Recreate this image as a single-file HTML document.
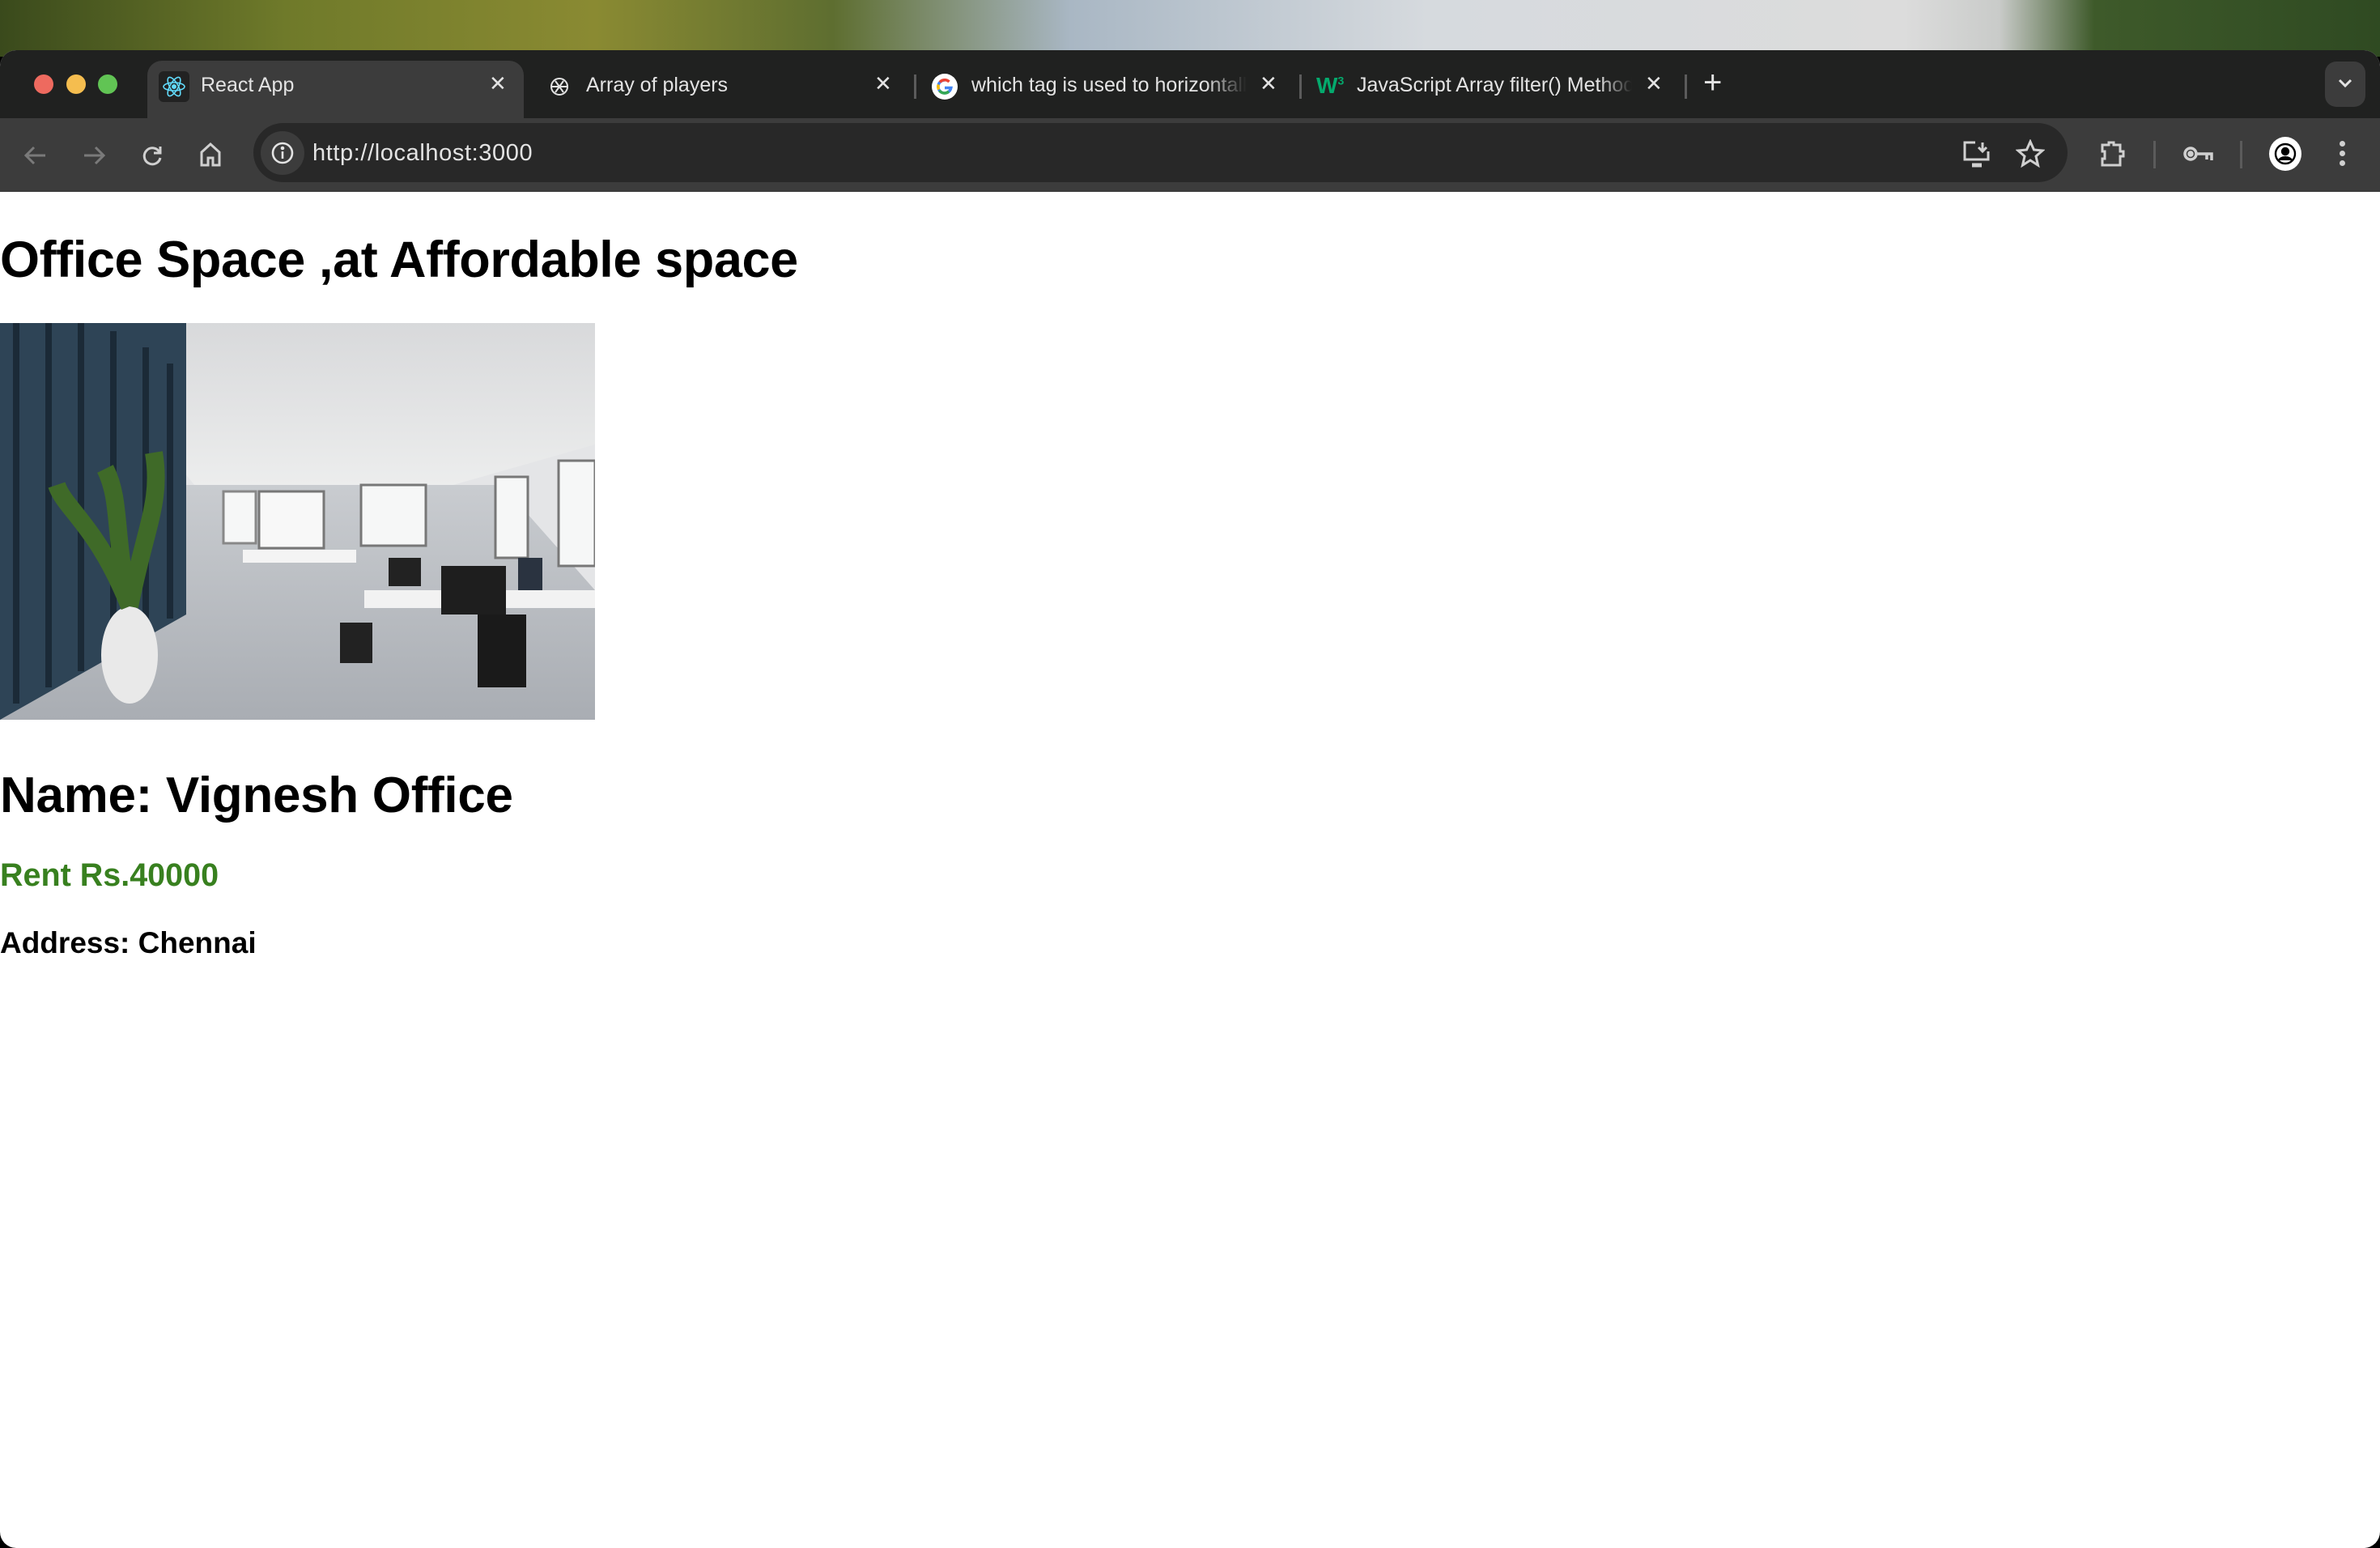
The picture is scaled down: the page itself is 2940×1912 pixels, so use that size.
<!DOCTYPE html>
<html><head><meta charset="utf-8"><style>
*{margin:0;padding:0;box-sizing:border-box}
body{width:2940px;height:1912px;overflow:hidden;background:#000;font-family:"Liberation Sans",sans-serif;position:relative}
.abs{position:absolute}
.wall{left:0;top:0;width:2940px;height:70px;background:linear-gradient(90deg,#3a4a1c 0%,#6f7a2a 12%,#8a8a32 25%,#5e6e30 35%,#a9b7c4 45%,#d6dade 60%,#dcdcdc 80%,#c9cbc9 84%,#3e5a2a 88%,#2f4a22 100%)}
.win{left:0;top:62px;width:2940px;height:1850px;background:#fff;border-radius:20px 20px 20px 20px;overflow:hidden}
.tabbar{left:0;top:0;width:2940px;height:84px;background:#202120}
.toolbar{left:0;top:84px;width:2940px;height:91px;background:#3c3c3c}
.tab{color:#e3e3e3;font-size:25px;white-space:nowrap;overflow:hidden}
.x{color:#e3e3e3;font-size:26px}
.sep{width:3px;height:30px;background:#5b5b5b}
.content{color:#000;font-weight:bold;white-space:nowrap}
</style></head><body>
<div class="abs wall"></div>
<div class="abs win">
 <div class="abs tabbar"></div>
 <div class="abs" style="left:42px;top:30px;width:24px;height:24px;border-radius:50%;background:#ee6a5f"></div>
 <div class="abs" style="left:82px;top:30px;width:24px;height:24px;border-radius:50%;background:#f5bd4f"></div>
 <div class="abs" style="left:121px;top:30px;width:24px;height:24px;border-radius:50%;background:#61c454"></div>
 <div class="abs" style="left:182px;top:13px;width:465px;height:72px;background:#3c3c3c;border-radius:18px 18px 0 0"></div>
 <div class="abs" style="left:196px;top:26px;width:38px;height:38px;background:#222;border-radius:6px"></div>
 <svg class="abs" style="left:200px;top:30px" width="30" height="30" viewBox="0 0 30 30" fill="none" stroke="#61dafb" stroke-width="1.6"><ellipse cx="15" cy="15" rx="13" ry="5"/><ellipse cx="15" cy="15" rx="13" ry="5" transform="rotate(60 15 15)"/><ellipse cx="15" cy="15" rx="13" ry="5" transform="rotate(-60 15 15)"/><circle cx="15" cy="15" r="2.2" fill="#61dafb"/></svg>
 <div class="abs tab" style="left:248px;top:29px">React App</div>
 <div class="abs x" style="left:604px;top:26px">✕</div>
 <svg class="abs" style="left:676px;top:30px" width="30" height="30" viewBox="0 0 30 30" fill="none" stroke="#e3e3e3" stroke-width="2"><circle cx="15" cy="15" r="10"/><path d="M10 8 L20 22 M20 8 L10 22 M5 15 H25"/></svg>
 <div class="abs tab" style="left:724px;top:29px">Array of players</div>
 <div class="abs x" style="left:1080px;top:26px">✕</div>
 <div class="abs sep" style="left:1129px;top:30px"></div>
 <svg class="abs" style="left:1150px;top:28px" width="34" height="34" viewBox="0 0 34 34"><circle cx="17" cy="17" r="16" fill="#fff"/><path d="M17 9a8 8 0 1 0 7.8 9.5H17" fill="none" stroke="#4285f4" stroke-width="3.5"/><path d="M11 11.5a8 8 0 0 1 11.5-.5" fill="none" stroke="#ea4335" stroke-width="3.5"/><path d="M9.3 14.5a8 8 0 0 0 .4 6" fill="none" stroke="#fbbc05" stroke-width="3.5"/><path d="M10.5 22a8 8 0 0 0 11.5 1" fill="none" stroke="#34a853" stroke-width="3.5"/></svg>
 <div class="abs tab" style="left:1200px;top:29px;width:340px;-webkit-mask-image:linear-gradient(90deg,#000 85%,transparent)">which tag is used to horizontally</div>
 <div class="abs x" style="left:1556px;top:26px">✕</div>
 <div class="abs sep" style="left:1605px;top:30px"></div>
 <div class="abs" style="left:1626px;top:28px;color:#04aa6d;font-weight:bold;font-size:28px">W<sup style="font-size:14px">3</sup></div>
 <div class="abs tab" style="left:1676px;top:29px;width:340px;-webkit-mask-image:linear-gradient(90deg,#000 88%,transparent)">JavaScript Array filter() Method</div>
 <div class="abs x" style="left:2032px;top:26px">✕</div>
 <div class="abs sep" style="left:2081px;top:30px"></div>
 <div class="abs" style="left:2104px;top:18px;color:#e3e3e3;font-size:40px">+</div>
 <div class="abs" style="left:2872px;top:14px;width:50px;height:56px;background:#3c3c3c;border-radius:14px"></div>
 <svg class="abs" style="left:2888px;top:35px" width="18" height="12" viewBox="0 0 18 12" fill="none" stroke="#e3e3e3" stroke-width="3"><path d="M2 2 L9 9 L16 2"/></svg>
 <div class="abs toolbar"></div>
 <svg class="abs" style="left:28px;top:114px" width="32" height="32" viewBox="0 0 32 32" fill="none" stroke="#7a7a7a" stroke-width="3"><path d="M28 16H5 M14 6 L4 16 L14 26"/></svg>
 <svg class="abs" style="left:100px;top:114px" width="32" height="32" viewBox="0 0 32 32" fill="none" stroke="#7a7a7a" stroke-width="3"><path d="M4 16H27 M18 6 L28 16 L18 26"/></svg>
 <svg class="abs" style="left:172px;top:114px" width="32" height="32" viewBox="0 0 32 32" fill="none" stroke="#d0d0d0" stroke-width="3"><path d="M25 12A10 10 0 1 0 26 19"/><path d="M26 5V13H18" /></svg>
 <svg class="abs" style="left:244px;top:112px" width="32" height="34" viewBox="0 0 32 34" fill="none" stroke="#d0d0d0" stroke-width="3"><path d="M5 14 L16 4 L27 14 V30 H19 V21 H13 V30 H5 Z"/></svg>
 <div class="abs" style="left:313px;top:90px;width:2241px;height:73px;background:#282828;border-radius:37px"></div>
 <div class="abs" style="left:322px;top:100px;width:54px;height:54px;background:#3c3c3c;border-radius:50%"></div>
 <svg class="abs" style="left:333px;top:111px" width="32" height="32" viewBox="0 0 32 32" fill="none" stroke="#e3e3e3" stroke-width="2.6"><circle cx="16" cy="16" r="12"/><path d="M16 14V23"/><circle cx="16" cy="10" r="1" fill="#e3e3e3"/></svg>
 <div class="abs" style="left:386px;top:111px;color:#e3e3e3;font-size:29px;letter-spacing:0.6px">http://localhost:3000</div>
 <svg class="abs" style="left:2424px;top:111px" width="36" height="34" viewBox="0 0 36 34" fill="none" stroke="#d0d0d0" stroke-width="3"><path d="M16 3H3V24H32V14"/><path d="M25 3V14 M20 9 L25 14 L30 9"/><path d="M12 31H24" stroke-width="5"/></svg>
 <svg class="abs" style="left:2490px;top:110px" width="36" height="36" viewBox="0 0 36 36" fill="none" stroke="#d0d0d0" stroke-width="3"><path d="M18 3 L22.5 13 L33 14 L25 21 L27.5 32 L18 26 L8.5 32 L11 21 L3 14 L13.5 13 Z"/></svg>
 <svg class="abs" style="left:2592px;top:110px" width="36" height="36" viewBox="0 0 36 36" fill="none" stroke="#d0d0d0" stroke-width="3"><path d="M5 7H13V4H19V7H27V15H31V21H27V32H5V24H8V15H5Z"/></svg>
 <div class="abs sep" style="left:2660px;top:112px;height:34px"></div>
 <svg class="abs" style="left:2696px;top:114px" width="40" height="28" viewBox="0 0 40 28" fill="none" stroke="#d0d0d0" stroke-width="3.5"><circle cx="10" cy="14" r="7"/><path d="M17 14H36V22 M30 14V21"/><circle cx="10" cy="14" r="2" fill="#d0d0d0"/></svg>
 <div class="abs sep" style="left:2767px;top:112px;height:34px"></div>
 <div class="abs" style="left:2803px;top:107px;width:40px;height:42px;background:#fff;border-radius:50%"></div>
 <svg class="abs" style="left:2808px;top:113px" width="30" height="30" viewBox="0 0 30 30" fill="none" stroke="#000" stroke-width="2.4"><circle cx="15" cy="15" r="12"/><circle cx="15" cy="12" r="4" fill="#000"/><path d="M7 23c3-5 13-5 16 0" fill="#000"/></svg>
 <div class="abs" style="left:2890px;top:112px;width:7px;height:7px;border-radius:50%;background:#d0d0d0;box-shadow:0 12px 0 #d0d0d0,0 24px 0 #d0d0d0"></div>

 <div class="abs content" style="left:0;top:228px;font-size:63px;line-height:63px;letter-spacing:-0.4px">Office Space ,at Affordable space</div>
 <svg class="abs" style="left:0;top:337px" width="735" height="490" viewBox="0 0 735 490">
  <defs>
   <linearGradient id="ceil" x1="0" y1="0" x2="0" y2="1"><stop offset="0" stop-color="#d8d9db"/><stop offset="1" stop-color="#eceded"/></linearGradient>
   <linearGradient id="floor" x1="0" y1="0" x2="0" y2="1"><stop offset="0" stop-color="#c9ccd0"/><stop offset="1" stop-color="#a9adb3"/></linearGradient>
  </defs>
  <rect width="735" height="490" fill="#e4e5e7"/>
  <polygon points="0,0 735,0 735,150 560,200 240,200 200,150 160,0" fill="url(#ceil)"/>
  <polygon points="220,200 620,200 735,330 735,490 0,490 0,420" fill="url(#floor)"/>
  <polygon points="0,0 230,0 230,360 0,490" fill="#2e4456"/>
  <g stroke="#1b2a37" stroke-width="8"><path d="M20 0V470 M60 0V450 M100 0V430 M140 10V410 M180 30V380 M210 50V365"/></g>
  <rect x="276" y="208" width="40" height="64" fill="#f6f7f7" stroke="#888" stroke-width="3"/>
  <rect x="320" y="208" width="80" height="70" fill="#f8f8f8" stroke="#777" stroke-width="3"/>
  <rect x="446" y="200" width="80" height="75" fill="#f6f7f7" stroke="#777" stroke-width="3"/>
  <rect x="612" y="190" width="40" height="100" fill="#f6f7f7" stroke="#777" stroke-width="3"/>
  <rect x="690" y="170" width="45" height="130" fill="#f6f7f7" stroke="#777" stroke-width="3"/>
  <rect x="300" y="280" width="140" height="16" fill="#f4f4f4"/>
  <rect x="450" y="330" width="285" height="22" fill="#f2f2f2"/>
  <rect x="480" y="290" width="40" height="35" fill="#222"/>
  <rect x="545" y="300" width="80" height="60" fill="#1e1e1e"/>
  <rect x="640" y="290" width="30" height="40" fill="#2a3340"/>
  <path d="M590 360 h60 v90 h-60 z" fill="#1a1a1a"/>
  <path d="M420 370 h40 v50 h-40 z" fill="#222"/>
  <ellipse cx="160" cy="410" rx="35" ry="60" fill="#e9e9e9"/>
  <path d="M160 350 C120 250 80 230 70 200 M160 350 C180 250 200 220 190 160 M160 350 C140 260 150 220 130 180" stroke="#3f6a28" stroke-width="22" fill="none"/>
 </svg>
 <div class="abs content" style="left:0;top:890px;font-size:62px;line-height:62px;letter-spacing:-0.3px">Name: Vignesh Office</div>
 <div class="abs content" style="left:0;top:1000px;font-size:39.5px;line-height:39.5px;color:#38801f">Rent Rs.40000</div>
 <div class="abs content" style="left:0;top:1084px;font-size:37px;line-height:37px">Address: Chennai</div>
</div>
</body></html>
